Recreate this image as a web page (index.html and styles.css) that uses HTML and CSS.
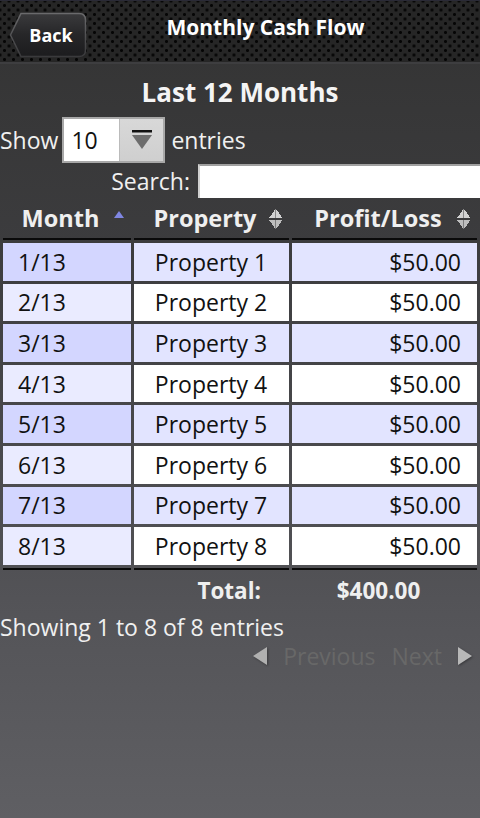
FILE: index.html
```html
<!DOCTYPE html>
<html>
<head>
    <meta charset="UTF-8">
    <meta name="viewport" content="width=device-width, initial-scale=1.0">
    <title>Monthly Cash Flow</title>
    <link rel="stylesheet" href="styles.css">
</head>
<body>
    <div class="header">
        <a class="back-button" href="#">
            <svg class="back-shape" width="78" height="46" viewBox="0 0 78 46">
                <defs>
                    <linearGradient id="backFill" x1="0" y1="0" x2="0" y2="1">
                        <stop offset="0" stop-color="#3a3a3c"/>
                        <stop offset="0.5" stop-color="#262628"/>
                        <stop offset="1" stop-color="#1c1c1e"/>
                    </linearGradient>
                    <linearGradient id="backEdge" x1="0" y1="0" x2="0" y2="1">
                        <stop offset="0" stop-color="#6a6a6c"/>
                        <stop offset="1" stop-color="#3a3a3c"/>
                    </linearGradient>
                </defs>
                <path d="M12 1.5 H70 Q76.5 1.5 76.5 8 V38 Q76.5 44.5 70 44.5 H12 L1.5 23 Z" fill="url(#backFill)" stroke="url(#backEdge)" stroke-width="1.5"/>
            </svg>
            <span class="back-label">Back</span>
        </a>
        <h1 class="title">Monthly Cash Flow</h1>
    </div>

    <div class="content">
        <h2 class="subtitle">Last 12 Months</h2>

        <div class="length-row">
            <span>Show</span>
            <div class="select">
                <span class="select-value">10</span>
                <span class="select-btn">
                    <svg width="26" height="22" viewBox="0 0 26 22">
                        <rect x="3" y="1" width="20" height="2.5" fill="#111"/>
                        <path d="M3 6 H23 L13 20 Z" fill="#6d6d6d"/>
                    </svg>
                </span>
            </div>
            <span>entries</span>
        </div>

        <div class="search-row">
            <label for="search">Search:</label>
            <input type="text" id="search">
        </div>

        <table class="data-table">
            <thead>
                <tr>
                    <th class="col-month">Month<span class="sort sort-asc"></span></th>
                    <th class="col-property">Property<span class="sort sort-both"></span></th>
                    <th class="col-profit">Profit/Loss<span class="sort sort-both"></span></th>
                </tr>
            </thead>
            <tbody>
                <tr class="odd"><td class="sorting-1">1/13</td><td class="center">Property 1</td><td class="right">$50.00</td></tr>
                <tr class="even"><td class="sorting-1">2/13</td><td class="center">Property 2</td><td class="right">$50.00</td></tr>
                <tr class="odd"><td class="sorting-1">3/13</td><td class="center">Property 3</td><td class="right">$50.00</td></tr>
                <tr class="even"><td class="sorting-1">4/13</td><td class="center">Property 4</td><td class="right">$50.00</td></tr>
                <tr class="odd"><td class="sorting-1">5/13</td><td class="center">Property 5</td><td class="right">$50.00</td></tr>
                <tr class="even"><td class="sorting-1">6/13</td><td class="center">Property 6</td><td class="right">$50.00</td></tr>
                <tr class="odd"><td class="sorting-1">7/13</td><td class="center">Property 7</td><td class="right">$50.00</td></tr>
                <tr class="even"><td class="sorting-1">8/13</td><td class="center">Property 8</td><td class="right">$50.00</td></tr>
            </tbody>
            <tfoot>
                <tr>
                    <th></th>
                    <th class="total-label">Total:</th>
                    <th class="total-value">$400.00</th>
                </tr>
            </tfoot>
        </table>

        <div class="info">Showing 1 to 8 of 8 entries</div>

        <div class="paginate">
            <span class="arrow arrow-left"></span>
            <span class="page-link">Previous</span>
            <span class="page-link">Next</span>
            <span class="arrow arrow-right"></span>
        </div>
    </div>
</body>
</html>
```

FILE: styles.css
```css
html {
    height: 100%;
}
body {
    margin: 0;
    min-height: 100%;
    font-family: "Open Sans", "DejaVu Sans", sans-serif;
    font-size: 23px;
    color: #f0f0f0;
    background: linear-gradient(#333333 0, #3c3c3e 30%, #545458 75%, #5f5f63 100%);
}
.header {
    display: flex;
    align-items: center;
    height: 61px;
    border-top: 1px solid #2a2a36;
    border-bottom: 2px solid #3e3e40;
    background-color: #262626;
    background-image:
        radial-gradient(circle, #050505 1.2px, transparent 1.8px),
        radial-gradient(circle, #050505 1.2px, transparent 1.8px);
    background-size: 9px 9px;
    background-position: 0 0, 4.5px 4.5px;
}
.back-button {
    position: relative;
    display: flex;
    align-items: center;
    justify-content: center;
    width: 78px;
    height: 46px;
    margin-left: 9px;
    margin-top: 6px;
    text-decoration: none;
}
.back-shape {
    position: absolute;
    left: 0;
    top: 0;
}
.back-label {
    position: relative;
    color: #fff;
    font-weight: bold;
    font-size: 18px;
    padding-left: 6px;
}
.title {
    flex: 1;
    margin: 0;
    padding-right: 36px;
    text-align: center;
    font-size: 21px;
    color: #fff;
    margin-top: -9px;
}
.content {
    padding-top: 11px;
}
.subtitle {
    margin: 0 0 8px;
    text-align: center;
    font-size: 26px;
    line-height: 34px;
    color: #f4f4f4;
}
.length-row {
    display: flex;
    align-items: center;
    gap: 4px;
    height: 46px;
}
.select {
    display: flex;
    height: 42px;
    border: 2px solid #a8a8a8;
    background: #fff;
    margin: 0 2px 0 0;
}
.select-value {
    width: 55px;
    padding-left: 7px;
    box-sizing: border-box;
    color: #111;
    line-height: 42px;
}
.select-btn {
    display: flex;
    align-items: center;
    justify-content: center;
    width: 43px;
    border-left: 1px solid #bbb;
    background: linear-gradient(#d8d8d8, #cfcfcf);
}
.search-row {
    display: flex;
    justify-content: flex-end;
    align-items: center;
    gap: 8px;
    height: 36px;
}
.search-row input {
    width: 282px;
    height: 34px;
    box-sizing: border-box;
    margin: 0;
    border: none;
    border-top: 2px solid #a0a0a0;
    border-left: 2px solid #d0d0d0;
    background: #fff;
    font: inherit;
}
.data-table {
    width: 100%;
    border-collapse: separate;
    border-spacing: 3px;
    margin-top: -1px;
}
.data-table th {
    position: relative;
    padding: 0 23px 0 10px;
    height: 37px;
    font-weight: bold;
    font-size: 23.5px;
    text-align: center;
    color: #efefef;
    white-space: nowrap;
}
.data-table thead th {
    border-bottom: 2px solid #0a0a0a;
    vertical-align: top;
    line-height: 34px;
}
.data-table tfoot th {
    border-top: 2px solid #0a0a0a;
    height: 38px;
    font-size: 22.5px;
    vertical-align: top;
    line-height: 42px;
}
.col-month {
    width: 95px;
}
.col-property {
    width: 122px;
}
.sort {
    position: absolute;
    right: 7px;
    top: 50%;
}
.sort-asc {
    margin-top: -9px;
    border-left: 5.5px solid transparent;
    border-right: 5.5px solid transparent;
    border-bottom: 7px solid #7f86e2;
}
.sort-both {
    width: 13px;
    height: 20px;
    margin-top: -11px;
    background:
        linear-gradient(to bottom right, transparent 50%, #d2d2d2 50%) left top / 50% 9px no-repeat,
        linear-gradient(to bottom left, transparent 50%, #d2d2d2 50%) right top / 50% 9px no-repeat,
        linear-gradient(to top right, transparent 50%, #bdbdbd 50%) left bottom / 50% 9px no-repeat,
        linear-gradient(to top left, transparent 50%, #bdbdbd 50%) right bottom / 50% 9px no-repeat;
}
.data-table td {
    height: 37.6px;
    padding: 0 16px 0 15px;
    color: #111;
    background: #fff;
}
.data-table tr.odd td {
    background: #e2e4ff;
}
.data-table tr.odd td.sorting-1 {
    background: #d3d6ff;
}
.data-table tr.even td.sorting-1 {
    background: #eaebff;
}
.center {
    text-align: center;
}
.right {
    text-align: right;
}
.data-table th.total-label {
    text-align: right;
    padding-right: 28px;
}
.data-table th.total-value {
    padding-right: 22px;
}
.info {
    margin-top: -5px;
    line-height: 34px;
}
.paginate {
    display: flex;
    justify-content: flex-end;
    align-items: center;
    gap: 16px;
    padding-right: 8px;
    height: 24px;
}
.page-link {
    color: #686868;
}
.arrow {
    width: 0;
    height: 0;
    border-top: 9px solid transparent;
    border-bottom: 9px solid transparent;
    filter: drop-shadow(1px 1px 1px rgba(0,0,0,0.35));
}
.arrow-left {
    border-right: 14px solid #b0b0b0;
}
.arrow-right {
    border-left: 14px solid #b8b8b8;
}
```
